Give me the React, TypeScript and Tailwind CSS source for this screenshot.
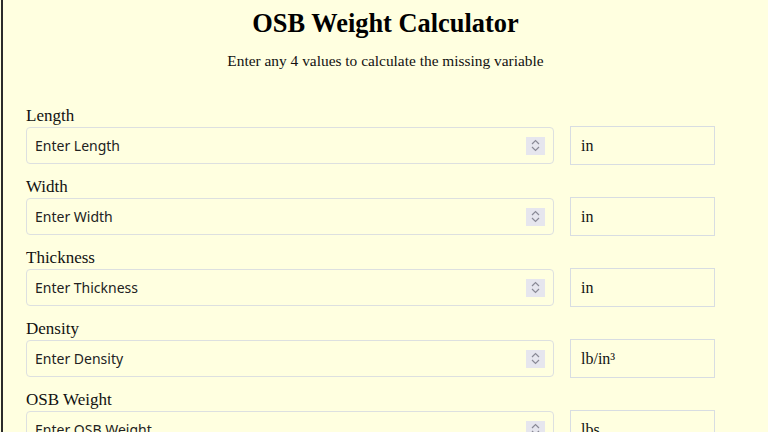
import React from "react";

const fields = [
  { label: "Length", placeholder: "Enter Length", unit: "in" },
  { label: "Width", placeholder: "Enter Width", unit: "in" },
  { label: "Thickness", placeholder: "Enter Thickness", unit: "in" },
  { label: "Density", placeholder: "Enter Density", unit: "lb/in³" },
  { label: "OSB Weight", placeholder: "Enter OSB Weight", unit: "lbs" },
];

const Spinner = () => (
  <div className="w-[19px] h-[18px] bg-[#e6e6ee] flex flex-col items-center justify-center gap-[1px]">
    <svg width="9" height="6" viewBox="0 0 9 6" fill="none">
      <path d="M1 5L4.5 1.5L8 5" stroke="#8a8a96" strokeWidth="1.2" />
    </svg>
    <svg width="9" height="6" viewBox="0 0 9 6" fill="none">
      <path d="M1 1L4.5 4.5L8 1" stroke="#8a8a96" strokeWidth="1.2" />
    </svg>
  </div>
);

export default function App() {
  return (
    <div className="min-h-screen bg-[#ffffe0] pl-px" style={{ fontFamily: '"Liberation Serif", "Times New Roman", serif' }}>
      <div className="min-h-screen border-l-2 border-[#2b2b2b] px-[23px] pt-[8px] text-[#111]">
        <h1 className="text-center text-[26.4px] leading-[30px] font-bold text-black">OSB Weight Calculator</h1>
        <p className="text-center text-[15.4px] leading-[18px] mt-[14px]">Enter any 4 values to calculate the missing variable</p>

        <div className="mt-[36px] flex flex-col gap-[12px]">
          {fields.map((f) => (
            <div key={f.label}>
              <label className="block text-[17px] leading-[20px]">{f.label}</label>
              <div className="flex items-center gap-[16px]">
                <div className="w-[528px] h-[37px] border border-[#dde0e0] rounded-[4px] flex items-center pl-[8px] pr-[8px]">
                  <input
                    type="text"
                    placeholder={f.placeholder}
                    className="flex-1 bg-transparent outline-none text-[14px] placeholder:text-[#222]"
                    style={{ fontFamily: '"Noto Sans", "DejaVu Sans", sans-serif' }}
                  />
                  <Spinner />
                </div>
                <div className="w-[145px] h-[39px] border border-[#d8dde2] flex items-center pl-[10px] text-[16px]">
                  {f.unit}
                </div>
              </div>
            </div>
          ))}
        </div>
      </div>
    </div>
  );
}
